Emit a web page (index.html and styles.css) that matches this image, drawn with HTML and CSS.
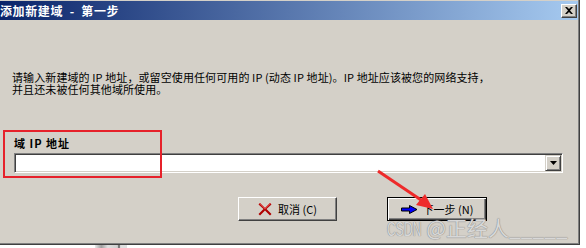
FILE: index.html
```html
<!DOCTYPE html>
<html lang="zh-CN">
<head>
    <meta charset="UTF-8">
    <title>添加新建域 - 第一步</title>
    <link rel="stylesheet" href="styles.css">
</head>
<body>
    <div class="window">
        <div class="titlebar">
            <span class="title">添加新建域 &nbsp;-&nbsp; 第一步</span>
            <span class="close">
                <svg width="8" height="7" viewBox="0 0 8 7"><path d="M0 0h2l2 2 2-2h2L5 3.5 8 7H6L4 5 2 7H0l3-3.5z" fill="#000"/></svg>
            </span>
        </div>
        <div class="content">
            <p class="intro">请输入新建域的 IP 地址，或留空使用任何可用的 IP (动态 IP 地址)。IP 地址应该被您的网络支持，<br>并且还未被任何其他域所使用。</p>
            <div class="field-label">域 IP 地址</div>
            <div class="combo">
                <div class="combo-text"></div>
                <span class="combo-btn">
                    <svg width="7" height="4" viewBox="0 0 7 4"><path d="M0 0h7L3.5 4z" fill="#000"/></svg>
                </span>
            </div>
            <div class="buttons">
                <button class="btn">
                    <svg width="14" height="14" viewBox="0 0 14 14">
                        <path d="M2 1L7 6 12 1 13.5 2.5 8.5 7 13.5 12 12 13.5 7 8.5 2 13.5 0.5 12 5.5 7 0.5 2.5z" fill="#b00000"/>
                        <path d="M2 1L7 6 12 1 12.8 1.8 7 7.5 1.2 1.8z" fill="#e04040"/>
                    </svg>
                    <span>取消 (C)</span>
                </button>
                <button class="btn default">
                    <svg width="17" height="9" viewBox="0 0 17 9">
                        <path d="M0.5 3h8V0.5L16 4.5 8.5 8.5V6h-8z" fill="#0000ff" stroke="#000" stroke-width="1"/>
                    </svg>
                    <span>下一步 (N)</span>
                </button>
            </div>
        </div>
    </div>
    <div class="taskbar-bit"></div>

    <!-- 标注 -->
    <div class="mark-box"></div>
    <svg class="mark-arrow" width="586" height="248" viewBox="0 0 586 248">
        <line x1="378" y1="171" x2="424" y2="202" stroke="#ee2a2a" stroke-width="3"/>
        <path d="M433 209L416 205 425 194z" fill="#ee2a2a"/>
    </svg>
    <div class="watermark"><span class="wm-latin">CSDN</span> @正经人_____</div>
</body>
</html>
```

FILE: styles.css
```css
body {
    margin: 0;
    background-color: #fff;
    font-family: "Noto Sans CJK SC", "Liberation Sans", sans-serif;
    font-size: 11px;
    color: #000;
    position: relative;
    width: 586px;
    height: 248px;
    overflow: hidden;
}
.window {
    box-sizing: border-box;
    width: 580px;
    height: 245px;
    padding: 1px 1px 0 0;
    background-color: #d4d0c8;
    border-right: 1px solid #404040;
    border-bottom: 1px solid #404040;
    box-shadow: inset -1px -1px #808080;
}
.titlebar {
    height: 19px;
    display: flex;
    align-items: center;
    justify-content: space-between;
    padding-right: 1px;
    background: linear-gradient(to right, #0a246a, #a6caf0);
}
.title {
    color: #fff;
    font-weight: bold;
    font-size: 12px;
    letter-spacing: 0.6px;
    line-height: 19px;
}
.close {
    box-sizing: border-box;
    width: 16px;
    height: 14px;
    display: flex;
    align-items: center;
    justify-content: center;
    background-color: #d4d0c8;
    border-top: 1px solid #fff;
    border-left: 1px solid #fff;
    border-right: 1px solid #404040;
    border-bottom: 1px solid #404040;
    box-shadow: inset -1px -1px #808080;
}
.content {
    padding-left: 12px;
}
.intro {
    margin: 51px 0 0 0;
    line-height: 12px;
    letter-spacing: 0.1px;
}
.field-label {
    margin: 42px 0 0 2px;
    font-weight: bold;
    letter-spacing: 1px;
    line-height: 12px;
}
.combo {
    box-sizing: border-box;
    width: 549px;
    height: 20px;
    margin: 4px 0 0 2px;
    display: flex;
    align-items: stretch;
    background-color: #fff;
    border-top: 1px solid #808080;
    border-left: 1px solid #808080;
    border-right: 1px solid #fff;
    border-bottom: 1px solid #fff;
    box-shadow: inset 1px 1px #404040, inset -1px -1px #d4d0c8;
    padding: 1px;
}
.combo-text {
    flex: 1;
}
.combo-btn {
    box-sizing: border-box;
    width: 16px;
    display: flex;
    align-items: center;
    justify-content: center;
    background-color: #d4d0c8;
    border-top: 1px solid #d4d0c8;
    border-left: 1px solid #d4d0c8;
    border-right: 1px solid #404040;
    border-bottom: 1px solid #404040;
    box-shadow: inset 1px 1px #fff, inset -1px -1px #808080;
}
.buttons {
    display: flex;
    gap: 50px;
    margin: 24px 0 0 226px;
}
.btn {
    box-sizing: border-box;
    width: 99px;
    height: 24px;
    display: flex;
    align-items: center;
    justify-content: center;
    gap: 6px;
    padding: 0;
    font-family: inherit;
    font-size: 11px;
    color: #000;
    background-color: #d4d0c8;
    border-top: 1px solid #fff;
    border-left: 1px solid #fff;
    border-right: 1px solid #404040;
    border-bottom: 1px solid #404040;
    box-shadow: inset -1px -1px #808080;
}
.btn.default {
    width: 100px;
    border: 1px solid #000;
    box-shadow: inset 1px 1px #fff, inset -1px -1px #404040, inset -2px -2px #808080;
    gap: 5px;
}
.taskbar-bit {
    position: absolute;
    left: 95px;
    top: 245px;
    width: 32px;
    height: 3px;
    background: linear-gradient(to right, #e8e8e8, #a0a0a0 20%, #e0e0e0 40%, #d0d0d0 70%, #505050 75%, #e0e0e0 80%);
}
.mark-box {
    position: absolute;
    left: 3px;
    top: 130px;
    width: 155px;
    height: 44px;
    border: 2px solid #e6212a;
}
.mark-arrow {
    position: absolute;
    left: 0;
    top: 0;
}
.watermark {
    position: absolute;
    left: 387px;
    top: 213px;
    font-size: 21px;
    line-height: 28px;
    color: #d8d8d8;
    text-shadow: 0 0 1px #8a8a8a, 0 0 1px #8a8a8a;
    white-space: nowrap;
}
.wm-latin {
    display: inline-block;
    font-family: "Liberation Sans", sans-serif;
    transform: scaleX(0.58);
    transform-origin: left center;
    margin-right: -25px;
}
```
